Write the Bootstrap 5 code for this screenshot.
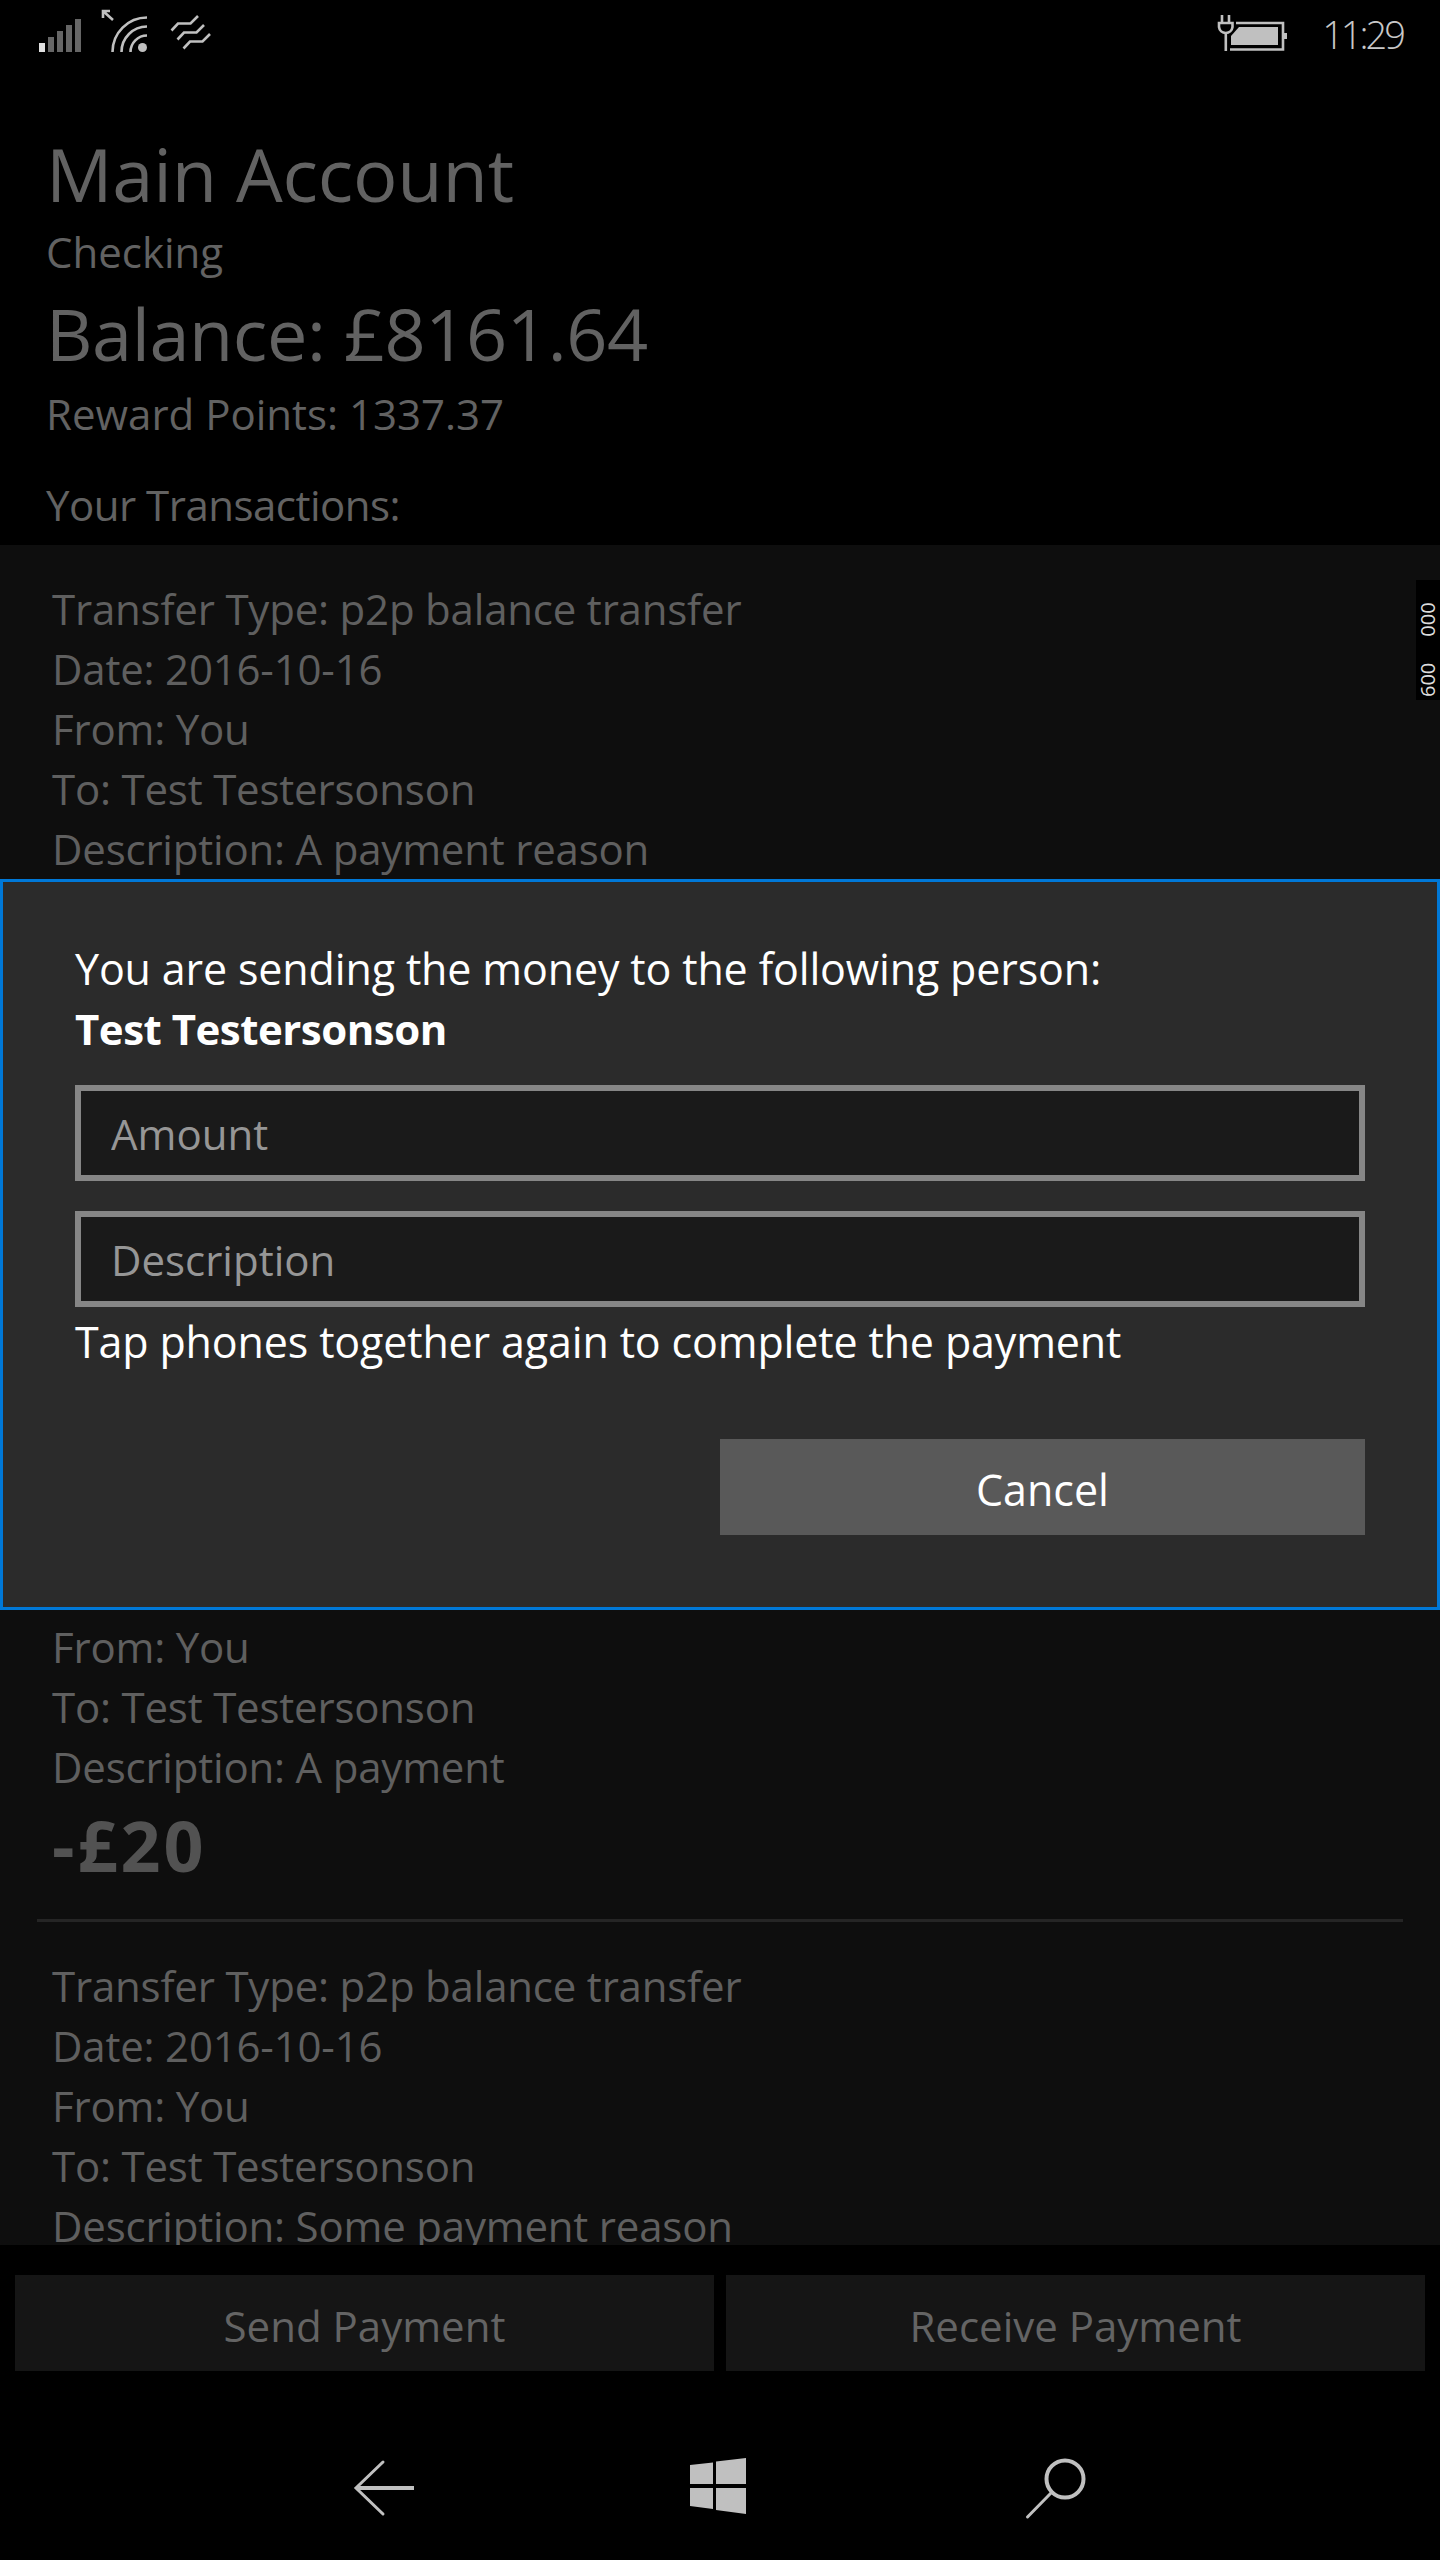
<!DOCTYPE html>
<html lang="en">
<head>
  <meta charset="UTF-8">
  <meta name="viewport" content="width=device-width, initial-scale=1.0">
  <title>Main Account</title>
  <link rel="stylesheet" href="https://cdn.jsdelivr.net/npm/bootstrap@5.3.0/dist/css/bootstrap.min.css">
  <style>
    body {
      background: #000;
      font-family: "Open Sans", "Noto Sans", sans-serif;
      color: #626262;
    }
    .phone { width: 1440px; height: 2560px; background: #000; overflow: hidden; }

    .status-bar { height: 60px; }
    .status-time { font-size: 38px; line-height: 68px; color: #c8c8c8; margin-left: 32px; margin-right: 37px; font-weight: 300; letter-spacing: -3px; }

    .acct-head { padding: 64px 46px 10px; }
    .acct-title { font-size: 74px; line-height: 99px; letter-spacing: -.2px; }
    .acct-big { font-size: 72px; line-height: 104px; letter-spacing: -.4px; }
    .acct-line { font-size: 42px; line-height: 58px; }
    .acct-sub { margin-top: 32px; line-height: 60px; letter-spacing: -.5px; }

    .tx-list { background: #0e0e0e; min-height: 0; }
    .tx-item { margin: 0 37px; padding: 34px 15px 35px; border-bottom: 3px solid #252525; height: 459px; }
    .tx-line { font-size: 42px; line-height: 60px; letter-spacing: -.2px; color: #5f5f5f; white-space: nowrap; }
    .tx-amount { font-size: 70px; line-height: 96px; font-weight: 700; color: #525252; letter-spacing: 3px; }

    .fps-box { top: 580px; right: 0; width: 24px; height: 120px; background: #000; color: #ddd; font-size: 20px; line-height: 24px; writing-mode: vertical-rl; transform: rotate(180deg); white-space: pre; text-align: left; padding-top: 3px; }

    .send-dialog { top: 879px; left: 0; width: 1440px; height: 731px; background: #2b2b2b; border: 3px solid #0078d7; padding: 57px 72px 0; color: #fff; }
    .dlg-text { font-size: 43px; line-height: 60px; letter-spacing: -.15px; }
    .dlg-name { font-size: 42px; font-weight: 700; letter-spacing: -.5px; }
    .dlg-tap { margin-top: 5px; }
    .dlg-input.form-control {
      height: 96px; margin-top: 26px; padding: 0 30px; background: #1a1a1a; border: 6px solid #868686; border-radius: 0;
      color: #fff; font-size: 42px;
    }
    .dlg-input.form-control::placeholder { color: #969696; opacity: 1; }
    .dlg-input.form-control + .dlg-input.form-control { margin-top: 30px; }
    .dlg-cancel.btn { width: 645px; height: 96px; margin-top: 67px; padding-top: 13px; background: #595959; border: 0; border-radius: 0; color: #fff; font-size: 43px; }

    .pay-row { padding: 30px 15px 29px; gap: 12px; }
    .pay-btn.btn { flex: 1 1 0; height: 96px; padding-top: 10px; background: #151515; border: 0; border-radius: 0; color: #646464; font-size: 42px; }

    .nav-bar { height: 160px; }
  </style>
</head>
<body>
  <div class="phone position-relative d-flex flex-column">
    <div class="status-bar d-flex justify-content-between flex-shrink-0">
      <svg width="220" height="60" viewBox="0 0 220 60">
        <rect x="39" y="43" width="6" height="9" fill="#e0e0e0"/>
        <rect x="48" y="37" width="6" height="15" fill="#666"/>
        <rect x="57" y="31" width="6" height="21" fill="#666"/>
        <rect x="66" y="25" width="6" height="27" fill="#666"/>
        <rect x="75" y="19" width="6" height="33" fill="#666"/>
        <g fill="none" stroke="#c0c0c0" stroke-width="2.6">
          <path d="M113 20 L103 11 M103 18 V11 H110"/>
          <path d="M112.500 52 A34.500 34.500 0 0 1 147 17.500"/>
          <path d="M121.500 52 A25.500 25.500 0 0 1 147 26.500"/>
          <path d="M130.500 52 A16.500 16.500 0 0 1 147 35.500"/>
          <path d="M171.500 30.500 L178 23.500 H190.500 L198 16"/>
          <path d="M177.500 39.500 L184 32.500 H196.500 L204 25"/>
          <path d="M183.500 48.500 L190 41.500 H202.500 L210 34"/>
        </g>
        <circle cx="142.500" cy="47.500" r="4.500" fill="#c0c0c0"/>
      </svg>
      <div class="d-flex">
        <svg width="75" height="60" viewBox="1215 0 75 60">
          <g fill="none" stroke="#c0c0c0" stroke-width="2.6">
            <path d="M1222 15 V23 M1229 15 V23"/>
            <path d="M1219 23 H1232.500 V27 A6.800 6.800 0 0 1 1219 27 Z"/>
            <path d="M1225.800 34 V51"/>
            <path d="M1236 23 H1283 V49.500 H1230"/>
          </g>
          <path d="M1239 27 H1278 V45 H1231 V36 Z" fill="#c0c0c0"/>
          <rect x="1284" y="33" width="3" height="6" fill="#c0c0c0"/>
        </svg>
        <span class="status-time">11:29</span>
      </div>
    </div>

    <div class="acct-head flex-shrink-0">
      <div class="acct-title">Main Account</div>
      <div class="acct-line">Checking</div>
      <div class="acct-big">Balance: £8161.64</div>
      <div class="acct-line">Reward Points: 1337.37</div>
      <div class="acct-line acct-sub">Your Transactions:</div>
    </div>

    <div class="tx-list flex-grow-1 overflow-hidden" id="txList"></div>

    <div class="pay-row d-flex flex-shrink-0">
      <button class="pay-btn btn" type="button">Send Payment</button>
      <button class="pay-btn btn" type="button">Receive Payment</button>
    </div>

    <div class="nav-bar flex-shrink-0 mt-auto">
      <svg width="1440" height="160" viewBox="0 2400 1440 160" class="d-block">
        <g fill="none" stroke="#c0c0c0" stroke-linecap="round">
          <path d="M383 2462 L356 2488 L383 2514" stroke-width="3"/>
          <path d="M356 2488 H414" stroke-width="4" stroke-linecap="butt"/>
          <ellipse cx="1065" cy="2479" rx="18.500" ry="18.500" stroke-width="4"/>
          <path d="M1051 2493 L1027.500 2517" stroke-width="3"/>
        </g>
        <g fill="#c0c0c0">
          <path d="M690 2465 L713 2462.500 V2484 H690 Z"/>
          <path d="M716 2461.500 L746 2458 V2484 H716 Z"/>
          <path d="M690 2488 H713 V2509 L690 2506 Z"/>
          <path d="M716 2488 H746 V2514 L716 2510 Z"/>
        </g>
      </svg>
    </div>

    <div class="fps-box position-absolute">600     000</div>

    <div class="send-dialog position-absolute">
      <div class="dlg-text">You are sending the money to the following person:</div>
      <div class="dlg-text dlg-name">Test Testersonson</div>
      <input class="dlg-input form-control" type="text" placeholder="Amount">
      <input class="dlg-input form-control" type="text" placeholder="Description">
      <div class="dlg-text dlg-tap">Tap phones together again to complete the payment</div>
      <div class="d-flex justify-content-end">
        <button class="dlg-cancel btn" type="button">Cancel</button>
      </div>
    </div>
  </div>

  <script>
    const transactions = [
      { desc: 'A payment reason', amount: '-£20' },
      { desc: 'A payment reason', amount: '-£20' },
      { desc: 'A payment', amount: '-£20' },
      { desc: 'Some payment reason', amount: '-£20' }
    ];

    const list = document.getElementById('txList');
    transactions.forEach(tx => {
      const item = document.createElement('div');
      item.className = 'tx-item';
      item.innerHTML = `
        <div class="tx-line">Transfer Type: p2p balance transfer</div>
        <div class="tx-line">Date: 2016-10-16</div>
        <div class="tx-line">From: You</div>
        <div class="tx-line">To: Test Testersonson</div>
        <div class="tx-line">Description: ${tx.desc}</div>
        <div class="tx-amount">${tx.amount}</div>
      `;
      list.appendChild(item);
    });
  </script>
</body>
</html>
